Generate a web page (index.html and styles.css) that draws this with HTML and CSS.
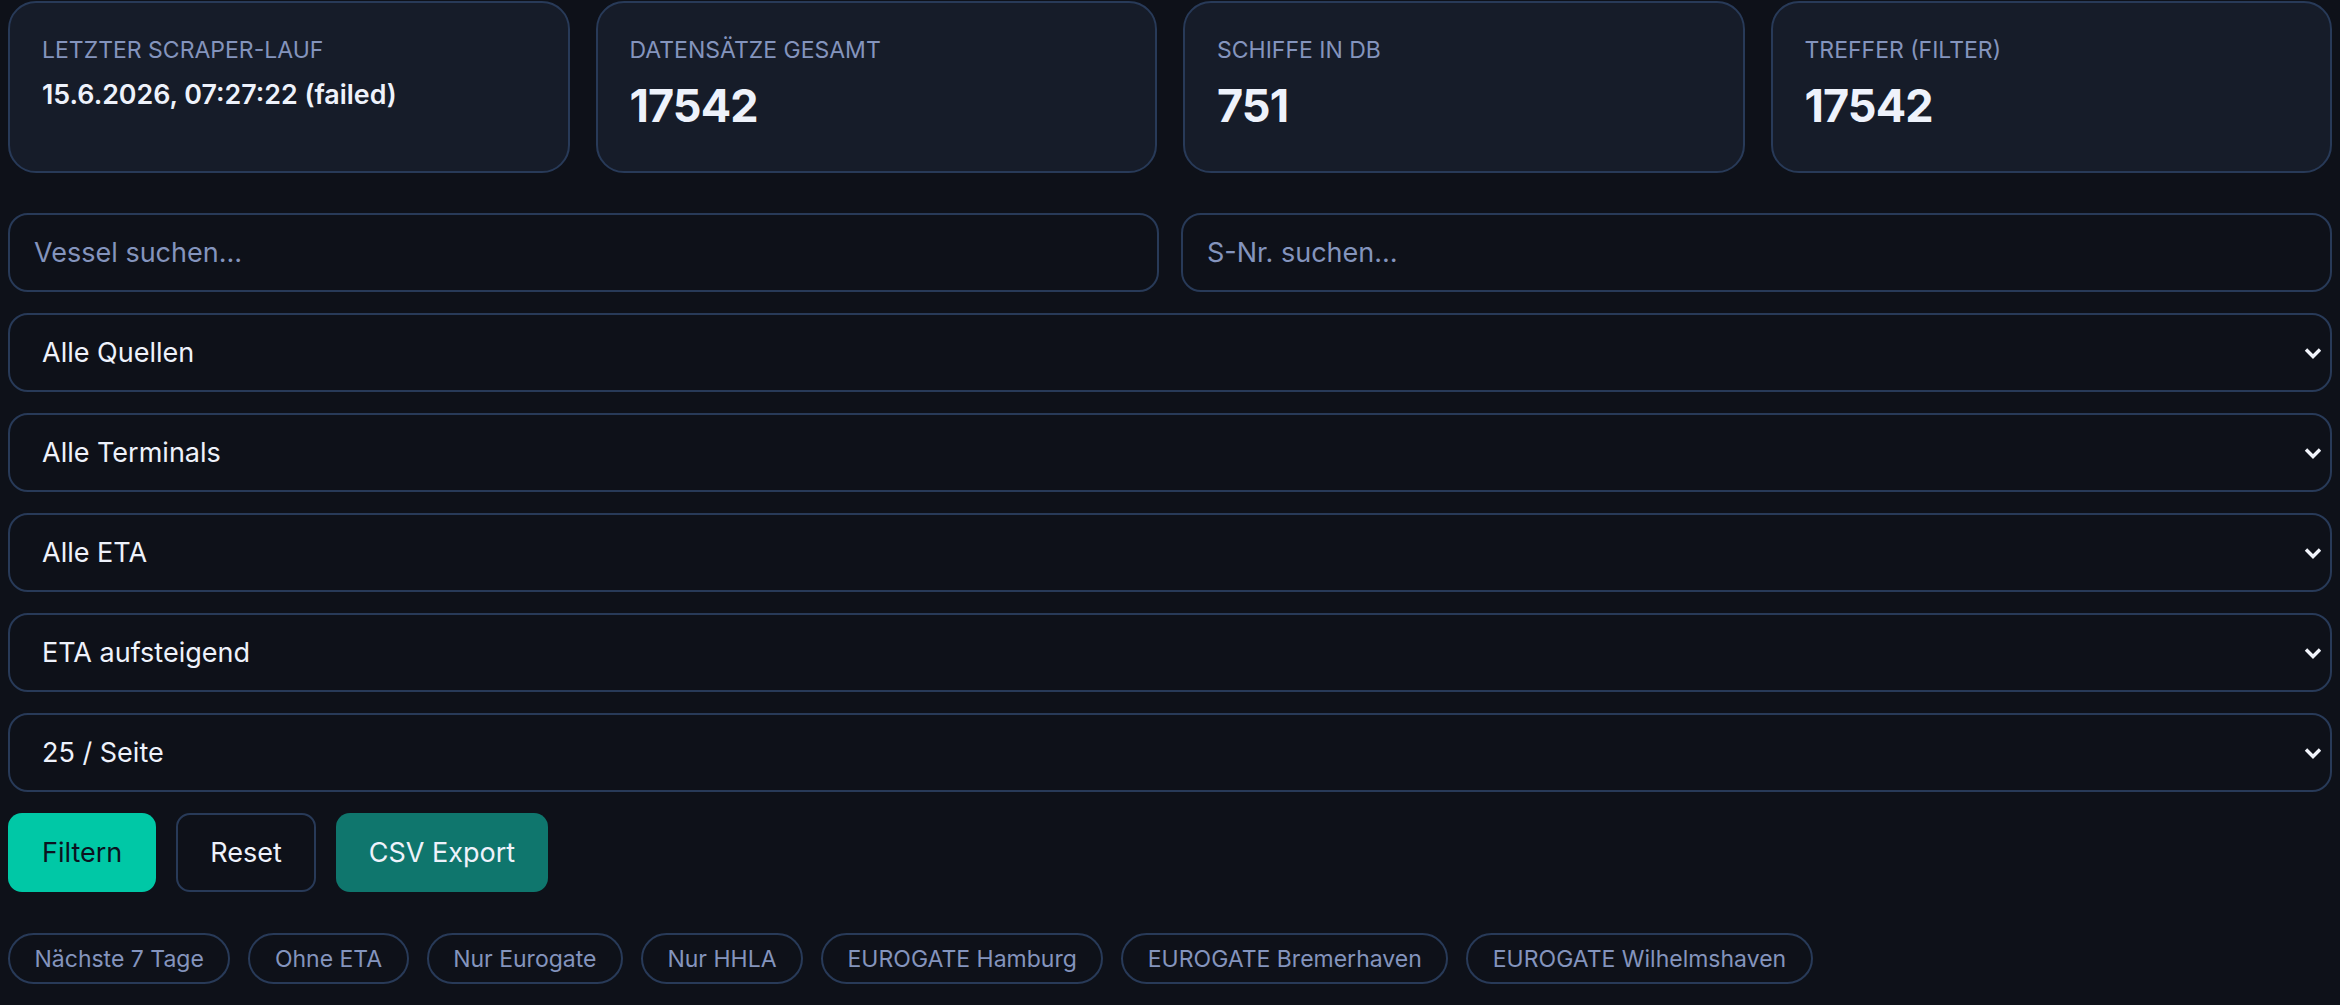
FILE: index.html
```html
<!DOCTYPE html>
<html lang="de">
<head>
  <title>Scraper Dashboard</title>
  <meta charset="UTF-8">
  <link rel="stylesheet" href="styles.css">
</head>
<body>
  <div class="stats-grid">
    <div class="stat-card">
      <div class="stat-label">Letzter Scraper-Lauf</div>
      <div class="stat-value small">15.6.2026, 07:27:22 (failed)</div>
    </div>
    <div class="stat-card">
      <div class="stat-label">Datensätze gesamt</div>
      <div class="stat-value">17542</div>
    </div>
    <div class="stat-card">
      <div class="stat-label">Schiffe in DB</div>
      <div class="stat-value">751</div>
    </div>
    <div class="stat-card">
      <div class="stat-label">Treffer (Filter)</div>
      <div class="stat-value">17542</div>
    </div>
  </div>

  <form class="filters" id="filterForm">
    <div class="search-row">
      <input type="text" name="vessel" placeholder="Vessel suchen…">
      <input type="text" name="snr" placeholder="S-Nr. suchen…">
    </div>
    <select name="source">
      <option>Alle Quellen</option>
    </select>
    <select name="terminal">
      <option>Alle Terminals</option>
    </select>
    <select name="eta">
      <option>Alle ETA</option>
    </select>
    <select name="sort">
      <option>ETA aufsteigend</option>
    </select>
    <select name="perPage">
      <option>25 / Seite</option>
    </select>
    <div class="actions">
      <button type="submit" class="btn btn-primary">Filtern</button>
      <button type="reset" class="btn btn-ghost">Reset</button>
      <button type="button" class="btn btn-export">CSV Export</button>
    </div>
  </form>

  <div class="quick-filters">
    <button class="chip">Nächste 7 Tage</button>
    <button class="chip">Ohne ETA</button>
    <button class="chip">Nur Eurogate</button>
    <button class="chip">Nur HHLA</button>
    <button class="chip">EUROGATE Hamburg</button>
    <button class="chip">EUROGATE Bremerhaven</button>
    <button class="chip">EUROGATE Wilhelmshaven</button>
  </div>
</body>
</html>
```

FILE: styles.css
```css
:root {
  --bg: #0e1119;
  --card: #161c29;
  --border: #283a58;
  --muted: #8494bd;
  --text: #eef2fb;
  --teal: #00c8a6;
  --teal-dark: #0f766d;
}
body {
  font-family: 'Inter', 'Noto Sans', sans-serif;
  margin: 0;
  padding: 1px 8px 0;
  background-color: var(--bg);
  color: var(--text);
}
.stats-grid {
  display: grid;
  grid-template-columns: repeat(4, 1fr);
  gap: 26px;
  margin-bottom: 40px;
}
.stat-card {
  background-color: var(--card);
  border: 2px solid var(--border);
  border-radius: 28px;
  padding: 33px 32px 38px;
}
.stat-label {
  font-size: 23px;
  text-transform: uppercase;
  color: var(--muted);
}
.stat-value {
  margin-top: 14px;
  font-size: 45px;
  font-weight: 700;
  letter-spacing: -0.02em;
}
.stat-value.small {
  margin-top: 14px;
  font-size: 26.8px;
  font-weight: 600;
  letter-spacing: 0;
}
.filters {
  display: flex;
  flex-direction: column;
  gap: 21px;
}
.search-row {
  display: grid;
  grid-template-columns: 1fr 1fr;
  gap: 22px;
}
input[type="text"], select {
  box-sizing: border-box;
  width: 100%;
  height: 79px;
  margin: 0;
  border: 2px solid var(--border);
  border-radius: 20px;
  background-color: transparent;
  color: var(--text);
  font-family: inherit;
  font-size: 27px;
  outline: none;
}
input[type="text"] {
  padding: 0 24px;
}
input::placeholder {
  color: var(--muted);
}
select {
  padding: 0 60px 0 32px;
  -webkit-appearance: none;
  appearance: none;
  background-image: url("data:image/svg+xml,%3Csvg xmlns='http://www.w3.org/2000/svg' width='20' height='14' viewBox='0 0 20 14'%3E%3Cpath d='M3 3.5l7 7 7-7' fill='none' stroke='%23f1f4fb' stroke-width='3.4'/%3E%3C/svg%3E");
  background-repeat: no-repeat;
  background-position: right 7px center;
}
.actions {
  display: flex;
  gap: 20px;
}
.btn {
  box-sizing: border-box;
  height: 79px;
  padding: 0 32px;
  border: 2px solid transparent;
  border-radius: 14px;
  font-family: inherit;
  font-size: 27px;
  font-weight: 400;
  cursor: pointer;
}
.btn-primary {
  background-color: var(--teal);
  color: #0c1220;
}
.btn-ghost {
  background-color: transparent;
  border-color: var(--border);
  color: var(--text);
}
.btn-export {
  background-color: var(--teal-dark);
  color: var(--text);
  padding: 0 31px;
}
.quick-filters {
  display: flex;
  flex-wrap: wrap;
  gap: 18px;
  margin-top: 41px;
}
.chip {
  box-sizing: border-box;
  height: 51px;
  padding: 0 24.5px;
  border: 2px solid var(--border);
  border-radius: 26px;
  background-color: transparent;
  color: var(--muted);
  font-family: inherit;
  font-size: 23px;
  cursor: pointer;
}
```
